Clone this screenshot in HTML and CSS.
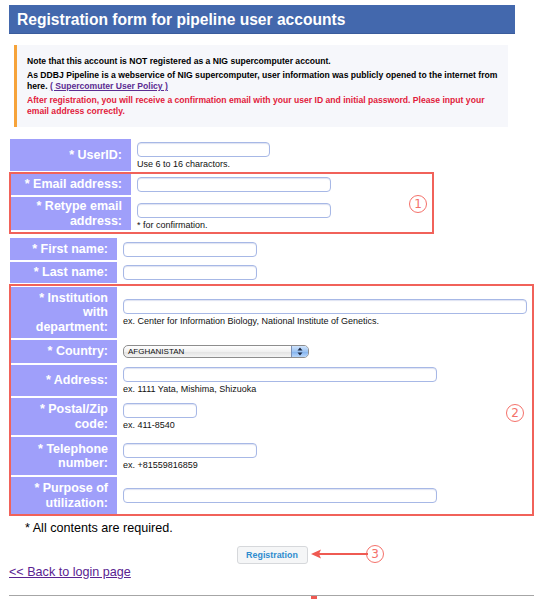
FILE: index.html
```html
<!DOCTYPE html>
<html>
<head>
<meta charset="utf-8">
<title>Registration form</title>
<link rel="stylesheet" href="styles.css">
</head>
<body>
<div class="page">
  <h1 class="title">Registration form for pipeline user accounts</h1>
  <div class="note">
    <p>Note that this account is NOT registered as a NIG supercomputer account.</p>
    <p>As DDBJ Pipeline is a webservice of NIG supercomputer, user information was publicly opened to the internet from here. <a href="#" class="policy">( Supercomuter User Policy )</a></p>
    <p class="warn">After registration, you will receive a confirmation email with your user ID and initial password. Please input your email address correctly.</p>
  </div>

  <form class="form">
    <div class="grid grid-a">
      <div class="lbl">* UserID:</div>
      <div class="fld"><input class="in w-s1" type="text"><div class="hint">Use 6 to 16 charactors.</div></div>
      <div class="lbl">* Email address:</div>
      <div class="fld"><input class="in w-m" type="text"></div>
      <div class="lbl">* Retype email address:</div>
      <div class="fld fld-low"><input class="in w-m" type="text"><div class="hint">* for confirmation.</div></div>
    </div>

    <div class="grid grid-b">
      <div class="lbl">* First name:</div>
      <div class="fld"><input class="in w-s" type="text"></div>
      <div class="lbl">* Last name:</div>
      <div class="fld"><input class="in w-s" type="text"></div>
    </div>

    <div class="grid grid-c">
      <div class="lbl">* Institution with department:</div>
      <div class="fld"><input class="in w-xl" type="text"><div class="hint">ex. Center for Information Biology, National Institute of Genetics.</div></div>
      <div class="lbl">* Country:</div>
      <div class="fld">
        <div class="select"><span class="sel-text">AFGHANISTAN</span><span class="sel-btn"><svg width="6" height="9" viewBox="0 0 6 9"><path d="M3 0.5 L5.5 3.5 L0.5 3.5 Z M3 8.5 L5.5 5.5 L0.5 5.5 Z" fill="#1d2b45"/></svg></span></div>
      </div>
      <div class="lbl">* Address:</div>
      <div class="fld"><input class="in w-l" type="text"><div class="hint">ex. 1111 Yata, Mishima, Shizuoka</div></div>
      <div class="lbl">* Postal/Zip code:</div>
      <div class="fld"><input class="in w-xs" type="text"><div class="hint">ex. 411-8540</div></div>
      <div class="lbl">* Telephone number:</div>
      <div class="fld"><input class="in w-s" type="text"><div class="hint">ex. +81559816859</div></div>
      <div class="lbl">* Purpose of utilization:</div>
      <div class="fld"><input class="in w-l" type="text"></div>
    </div>

    <p class="req">* All contents are required.</p>
    <div class="btnrow"><button type="button" class="btn">Registration</button></div>
  </form>

  <a href="#" class="back">&lt;&lt; Back to login page</a>
  <hr class="rule">

  <div class="mark box1"></div>
  <div class="mark box2"></div>
  <span class="num num1">1</span>
  <span class="num num2">2</span>
  <span class="num num3">3</span>
  <svg class="arrow" width="58" height="12" viewBox="0 0 58 12"><line x1="8" y1="6" x2="57" y2="6" stroke="#ef5a52" stroke-width="2"/><path d="M0 6 L10 1.5 L8 6 L10 10.5 Z" fill="#ef5a52"/></svg>
  <div class="tick"></div>
</div>
</body>
</html>
```

FILE: styles.css
```css
html, body {
  margin: 0;
  padding: 0;
  background: #ffffff;
}

.page {
  position: relative;
  width: 542px;
  height: 610px;
  padding: 5px 0 0 9px;
  box-sizing: border-box;
  font-family: "Liberation Sans", Arial, sans-serif;
  color: #000;
}

.title {
  margin: 0;
  width: 506px;
  height: 29px;
  line-height: 29px;
  padding-left: 8px;
  box-sizing: border-box;
  background: #4368ad;
  border-bottom: 1px solid #3a5c9c;
  color: #ffffff;
  font-size: 15.6px;
  font-weight: bold;
}

.note {
  margin: 11px 0 0 5px;
  width: 494px;
  box-sizing: border-box;
  border-left: 3px solid #f6a33a;
  background: #f6f7fb;
  padding: 11px 3px 7px 10px;
  font-size: 8.6px;
  font-weight: bold;
  line-height: 11px;
}

.note p {
  margin: 0 0 3px 0;
}

.note .policy {
  color: #5b2c92;
  text-decoration: underline;
}

.note .warn {
  color: #e21b3c;
}

.form {
  margin: 12px 0 0 1px;
}

.grid {
  display: grid;
  gap: 2px;
}

.grid-a {
  grid-template-columns: 121px 1fr;
  grid-template-rows: 32px 22px 33px;
}

.grid-b {
  margin-top: 8px;
  grid-template-columns: 107px 1fr;
  grid-template-rows: 22px 21px;
}

.grid-c {
  margin-top: 4px;
  grid-template-columns: 107px 1fr;
  grid-template-rows: 51px 23px 31px 37px 38px 37px;
}

.lbl {
  background: #9f9ffa;
  color: #ffffff;
  font-weight: bold;
  font-size: 12.5px;
  line-height: 14.5px;
  text-align: right;
  padding: 0 9px 0 4px;
  display: flex;
  align-items: center;
  justify-content: flex-end;
}

.fld {
  padding-left: 4px;
  display: flex;
  flex-direction: column;
  justify-content: center;
  align-items: flex-start;
}

.fld-low {
  justify-content: flex-end;
}

.in {
  display: block;
  height: 15px;
  box-sizing: border-box;
  margin: 0;
  padding: 0 3px;
  border: 1px solid #a7b8e6;
  border-radius: 4px;
  background: #ffffff;
  box-shadow: inset 0 1px 1px rgba(120, 140, 200, 0.25);
  font-size: 9px;
}

.w-xs { width: 74px; }
.w-s1 { width: 133px; }
.w-s { width: 134px; }
.w-m { width: 194px; }
.w-l { width: 314px; }
.w-xl { width: 404px; }

.hint {
  margin-top: 2px;
  font-size: 9px;
  line-height: 10px;
  color: #111;
}

.select {
  width: 186px;
  height: 13px;
  box-sizing: border-box;
  border: 1px solid #8d8d8d;
  border-radius: 5px;
  background: linear-gradient(#ffffff, #f1f1f1 50%, #e2e2e2 51%, #f4f4f4);
  display: flex;
  align-items: center;
  justify-content: space-between;
  overflow: hidden;
}

.sel-text {
  font-size: 8px;
  line-height: 11px;
  padding-left: 4px;
  color: #111;
}

.sel-btn {
  width: 16px;
  height: 11px;
  display: flex;
  align-items: center;
  justify-content: center;
  background: linear-gradient(#cfe3fb, #9cc3f2 50%, #7fb0ee 51%, #b9d7fa);
  border-left: 1px solid #7a8fb5;
}

.req {
  margin: 7px 0 0 15px;
  font-size: 12.6px;
  line-height: 15px;
}

.btnrow {
  margin-top: 10px;
  display: flex;
  justify-content: center;
  width: 524px;
}

.btn {
  width: 71px;
  height: 18px;
  padding: 0;
  border: 1px solid #d6d8db;
  border-radius: 3px;
  background: #f5f6f7;
  color: #2f8ccf;
  font-family: "Liberation Sans", Arial, sans-serif;
  font-weight: bold;
  font-size: 8.9px;
}

.back {
  display: block;
  margin-top: 1px;
  width: max-content;
  font-size: 12.6px;
  line-height: 15px;
  color: #5a2291;
  text-decoration: underline;
}

.rule {
  margin: 15px 0 0 0;
  width: 525px;
  height: 0;
  border: 0;
  border-top: 1px solid #a6a6a6;
}

.mark {
  position: absolute;
  border: 2px solid #f1625a;
  box-sizing: border-box;
}

.box1 {
  left: 9px;
  top: 172px;
  width: 425px;
  height: 62px;
}

.box2 {
  left: 9px;
  top: 284px;
  width: 525px;
  height: 232px;
}

.num {
  position: absolute;
  width: 16px;
  height: 16px;
  border: 1px solid #f4716a;
  border-radius: 50%;
  color: #f4716a;
  font-family: "DejaVu Sans", sans-serif;
  font-size: 12px;
  line-height: 16px;
  text-align: center;
}

.num1 { left: 409px; top: 195px; }
.num2 { left: 506px; top: 404px; }
.num3 { left: 366px; top: 545px; }

.arrow {
  position: absolute;
  left: 311px;
  top: 548px;
}

.tick {
  position: absolute;
  left: 311px;
  top: 596px;
  width: 6px;
  height: 3px;
  background: #ef5a52;
}
```
